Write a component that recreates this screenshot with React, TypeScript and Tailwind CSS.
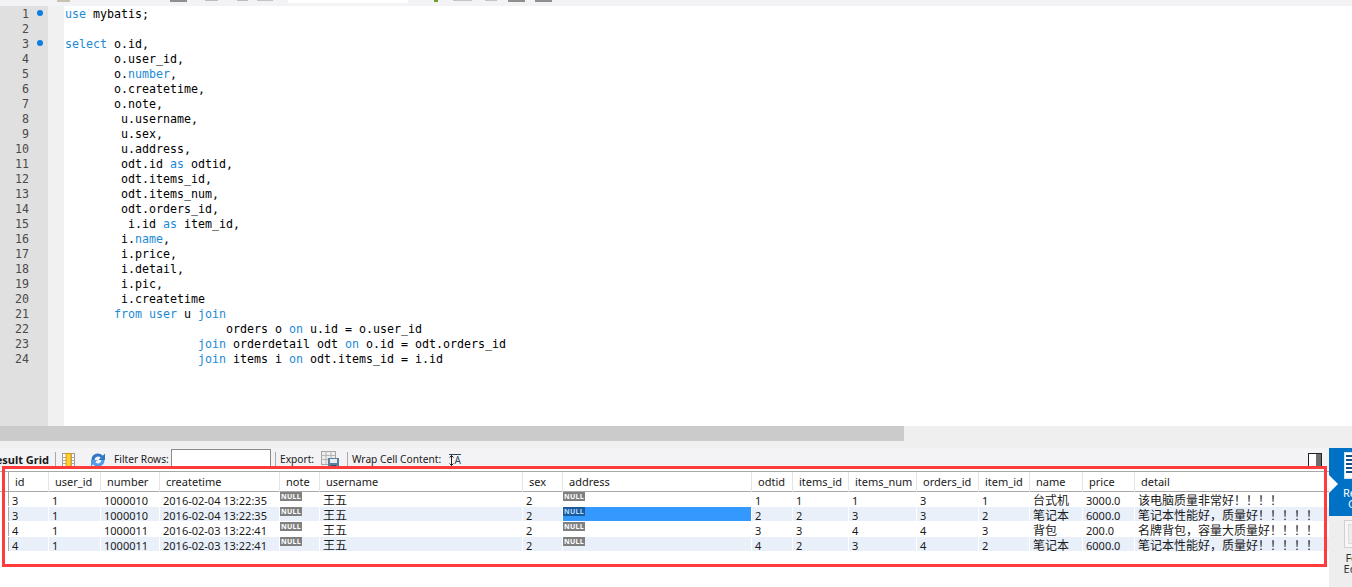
const kw = new Set(['use', 'select', 'number', 'as', 'name', 'from', 'user', 'join', 'on']);

// indent in characters, then the statement
const sqlLines: [number, string][] = [
  [0, 'use mybatis;'],
  [0, ''],
  [0, 'select o.id,'],
  [7, 'o.user_id,'],
  [7, 'o.number,'],
  [7, 'o.createtime,'],
  [7, 'o.note,'],
  [8, 'u.username,'],
  [8, 'u.sex,'],
  [8, 'u.address,'],
  [8, 'odt.id as odtid,'],
  [8, 'odt.items_id,'],
  [8, 'odt.items_num,'],
  [8, 'odt.orders_id,'],
  [9, 'i.id as item_id,'],
  [8, 'i.name,'],
  [8, 'i.price,'],
  [8, 'i.detail,'],
  [8, 'i.pic,'],
  [8, 'i.createtime'],
  [7, 'from user u join'],
  [23, 'orders o on u.id = o.user_id'],
  [19, 'join orderdetail odt on o.id = odt.orders_id'],
  [19, 'join items i on odt.items_id = i.id'],
];

const columns = [
  'id', 'user_id', 'number', 'createtime', 'note', 'username', 'sex', 'address',
  'odtid', 'items_id', 'items_num', 'orders_id', 'item_id', 'name', 'price', 'detail',
];

const rows = [
  ['3', '1', '1000010', '2016-02-04 13:22:35', null, '王五', '2', null, '1', '1', '1', '3', '1', '台式机', '3000.0', '该电脑质量非常好！！！！'],
  ['3', '1', '1000010', '2016-02-04 13:22:35', null, '王五', '2', null, '2', '2', '3', '3', '2', '笔记本', '6000.0', '笔记本性能好，质量好！！！！！'],
  ['4', '1', '1000011', '2016-02-03 13:22:41', null, '王五', '2', null, '3', '3', '4', '4', '3', '背包', '200.0', '名牌背包，容量大质量好！！！！'],
  ['4', '1', '1000011', '2016-02-03 13:22:41', null, '王五', '2', null, '4', '2', '3', '4', '2', '笔记本', '6000.0', '笔记本性能好，质量好！！！！！'],
];

const gridCols =
  'grid grid-cols-[8px_40px_52px_59px_120px_40px_203px_40px_189px_41px_56px_68px_62px_51px_53px_52px_1fr]';

function SqlLine({ indent, text }: { indent: number; text: string }) {
  const parts = text.split(/(\s+|[.,;])/);
  return (
    <div className="h-[15px] whitespace-pre text-black">
      {' '.repeat(indent)}
      {parts.map((p, i) => (
        <span key={i} className={kw.has(p) ? 'text-[#1b8ad6]' : undefined}>
          {p}
        </span>
      ))}
    </div>
  );
}

function NullBadge({ selected }: { selected?: boolean }) {
  return (
    <div
      className={`flex h-[9px] w-[22px] items-center justify-center text-[7px] leading-none font-bold tracking-[0.3px] ${
        selected ? 'bg-[#1c5c9c] text-[#b8dcff]' : 'bg-[#808080] text-white'
      }`}
    >
      NULL
    </div>
  );
}

function Sep() {
  return <div className="h-[17px] w-px shrink-0 bg-[#a9a9a9]" />;
}

function GridIcon() {
  return (
    <svg width="13" height="14" viewBox="0 0 13 14" className="ml-[6px] shrink-0">
      <rect x="0.5" y="0.5" width="12" height="13" fill="#fff" stroke="#9a9a9a" />
      <path d="M0 4.5h13M0 7.5h13M0 10.5h13M9.5 0v14" stroke="#a8a8a8" />
      <rect x="4" y="0.5" width="5" height="13" fill="#ffcf3a" stroke="#d99a00" />
    </svg>
  );
}

function RefreshIcon() {
  return (
    <svg width="16" height="14" viewBox="0 0 16 14" className="ml-[15px] shrink-0">
      <path d="M3 7a5 5 0 0 1 9-3" stroke="#2f78c8" strokeWidth="3" fill="none" />
      <path d="M15 0.5v6.5h-6.5z" fill="#2f78c8" />
      <path d="M13 7a5 5 0 0 1-9 3" stroke="#4f9be6" strokeWidth="3" fill="none" />
      <path d="M1 13.5v-6.5h6.5z" fill="#4f9be6" />
    </svg>
  );
}

function ExportIcon() {
  return (
    <svg width="18" height="18" viewBox="0 0 18 18" className="ml-[7px] shrink-0 self-start">
      <rect x="0.5" y="0.5" width="14" height="13" fill="#eee" stroke="#a5a5a5" />
      <path d="M0 4.5h14M0 8.5h14M5 0v14M10 0v14" stroke="#b5b5b5" />
      <rect x="7" y="7" width="11" height="11" fill="#5b7f9c" />
      <rect x="9" y="8" width="7" height="4" fill="#e8eef2" />
      <rect x="10" y="14" width="5" height="4" fill="#2f526e" />
    </svg>
  );
}

function WrapIcon() {
  return (
    <div className="relative ml-[10px] flex h-[13px] w-[12px] shrink-0 items-center justify-end border-y border-[#2d4a66] text-[10px] leading-none text-[#2d4a66]">
      <svg width="5" height="11" viewBox="0 0 5 11" className="absolute left-0 top-0">
        <path d="M2.5 0v11M0.5 2.5L2.5 0.5L4.5 2.5M0.5 8.5L2.5 10.5L4.5 8.5" stroke="#222" fill="none" />
      </svg>
      A
    </div>
  );
}

function Cell({ value, col, selected }: { value: string | null; col: number; selected: boolean }) {
  const cjk = col === 5 || col === 13 || col === 15;
  return (
    <div
      className={`h-[14px] whitespace-nowrap border-l ${col === 0 ? 'border-[#a8a8a8]' : 'border-white'} ${
        selected ? 'bg-[#3399ff]' : ''
      } ${value === null ? '' : cjk ? 'pl-[3px] text-[12px] leading-[17px]' : 'pl-[3px] leading-[17px]'}`}
    >
      {value === null ? <NullBadge selected={selected} /> : value}
    </div>
  );
}

export default function App() {
  return (
    <div className="relative flex h-[587px] w-[1352px] flex-col overflow-hidden bg-white text-[11px] text-[#1a1a1a] [font-family:'Noto_Sans','Noto_Sans_CJK_SC',sans-serif]">
      {/* Clipped query toolbar */}
      <div className="flex h-[6px] items-start bg-[#f3f3f5]">
        <div className="ml-[57px] h-[2px] w-[13px] bg-[#c9c2b4]" />
        <div className="ml-[100px] h-[2px] w-[17px] bg-[#8f8f8f]" />
        <div className="ml-[18px] h-[1px] w-[13px] bg-[#bdbdbd]" />
        <div className="ml-[19px] h-[1px] w-[11px] bg-[#bdbdbd]" />
        <div className="ml-[9px] h-[1px] w-[16px] bg-[#c4c4c4]" />
        <div className="ml-[15px] h-[3px] w-[120px] bg-white" />
        <div className="ml-[26px] h-[2px] w-[4px] bg-[#6f9e2a]" />
        <div className="ml-[15px] h-[1px] w-[19px] bg-[#c4c4c4]" />
        <div className="ml-[13px] h-[1px] w-[12px] bg-[#c4c4c4]" />
        <div className="ml-[11px] h-[2px] w-[17px] bg-[#8f8f8f]" />
        <div className="ml-[10px] h-[2px] w-[17px] bg-[#8f8f8f]" />
      </div>

      {/* SQL editor */}
      <div className="flex h-[420px] text-[11.63px] [font-family:'DejaVu_Sans_Mono',monospace]">
        <div className="flex w-[48px] shrink-0 flex-col bg-[#e0e0e0] pt-px text-[#4a4a4a]">
          {sqlLines.map((_, i) => (
            <div key={i} className="flex h-[15px] items-center">
              <span className="w-[29px] text-right">{i + 1}</span>
              {(i === 0 || i === 2) && (
                <span className="ml-[8px] mb-[3px] h-[6px] w-[6px] rounded-full bg-[#0a7fe0]" />
              )}
            </div>
          ))}
        </div>
        <div className="w-[16px] shrink-0 bg-[#f1f1f1] bg-[radial-gradient(#dcdcdc_0.5px,transparent_0.5px)] bg-[length:2px_2px]" />
        <div className="flex-1 pt-px pl-px leading-[15px]">
          {sqlLines.map(([indent, text], i) => (
            <SqlLine key={i} indent={indent} text={text} />
          ))}
        </div>
      </div>

      {/* Horizontal scrollbar */}
      <div className="h-[22px] bg-[#efefef]">
        <div className="h-[15px] w-[904px] bg-[#cbcbcb]" />
      </div>

      <div className="flex flex-1">
        <div className="flex w-[1329px] flex-col">
          {/* Result toolbar */}
          <div className="flex h-[21px] items-center bg-[#f3f3f5] pt-[3px] text-[10.2px]">
            <div className="flex w-[49px] shrink-0 justify-end overflow-hidden whitespace-nowrap text-[11px] font-bold">Result Grid</div>
            <div className="ml-[6px] shrink-0"><Sep /></div>
            <GridIcon />
            <RefreshIcon />
            <span className="ml-[8px] w-[52px] shrink-0 whitespace-nowrap">Filter Rows:</span>
            <input className="ml-[5px] -mt-[2px] h-[19px] w-[100px] shrink-0 self-start border border-[#8a8a8a] bg-white" />
            <div className="ml-[4px] shrink-0"><Sep /></div>
            <span className="ml-[4px] w-[34px] shrink-0 whitespace-nowrap">Export:</span>
            <ExportIcon />
            <div className="ml-[8px] shrink-0"><Sep /></div>
            <span className="ml-[4px] w-[87px] shrink-0 whitespace-nowrap">Wrap Cell Content:</span>
            <WrapIcon />
            <div className="ml-auto mr-[7px] flex h-[14px] w-[14px] shrink-0 border border-[#222] bg-white">
              <div className="ml-auto h-full w-[5px] bg-[#6d6d6d]" />
            </div>
          </div>

          {/* Result grid */}
          <div className="flex-1 pt-[2px]">
            <div className={`${gridCols} h-[21px] border-y border-[#a8a8a8]`}>
              <div />
              {columns.map((c, i) => (
                <div key={c} className={`border-l pl-[6px] leading-[20px] ${i === 0 ? 'border-[#a8a8a8]' : 'border-[#e4e4e4]'}`}>
                  {c}
                </div>
              ))}
            </div>
            {rows.map((row, r) => (
              <div key={r} className={`${gridCols} h-[15px] border-b border-white ${r % 2 ? 'bg-[#e9f0fa]' : 'bg-white'}`}>
                <div className="bg-white" />
                {row.map((v, c) => (
                  <Cell key={c} value={v} col={c} selected={r === 1 && c === 7} />
                ))}
              </div>
            ))}
          </div>
        </div>

        {/* Side tabs, wider than the window and clipped by it */}
        <div className="w-[23px] shrink-0 overflow-hidden bg-[#eeeeee]">
          <div className="relative flex h-[68px] w-[60px] flex-col items-center bg-[#0072c6] text-white">
            <div className="absolute left-0 top-[27px] h-0 w-0 border-y-[9px] border-l-[9px] border-y-transparent border-l-white" />
            <svg width="30" height="27" viewBox="0 0 30 27" className="mt-[4px]">
              <rect x="0.5" y="0.5" width="29" height="26" fill="#fff" stroke="#cfe3f5" />
              <path d="M2 4h26M2 8h26M2 12h26M2 16h26M2 20h26" stroke="#0b4f86" strokeWidth="2" />
            </svg>
            <div className="mt-[8px] text-center leading-[11px]">
              Result
              <br />
              Grid
            </div>
          </div>
          <div className="flex w-[60px] flex-col items-center text-[#333]">
            <div className="mt-[4px] h-[28px] w-[30px] border border-[#d0d0d0] bg-[#f7f7f7] p-[3px]">
              <div className="h-full w-full border border-[#dcdcdc] bg-[#ececec]" />
            </div>
            <div className="mt-[4px] text-center leading-[11px]">
              Form
              <br />
              Editor
            </div>
          </div>
        </div>
      </div>

      {/* Red annotation drawn over the screenshot */}
      <div className="pointer-events-none absolute left-[2px] top-[466px] h-[101px] w-[1325px] border-[3px] border-[#ff3b3b]" />
    </div>
  );
}
